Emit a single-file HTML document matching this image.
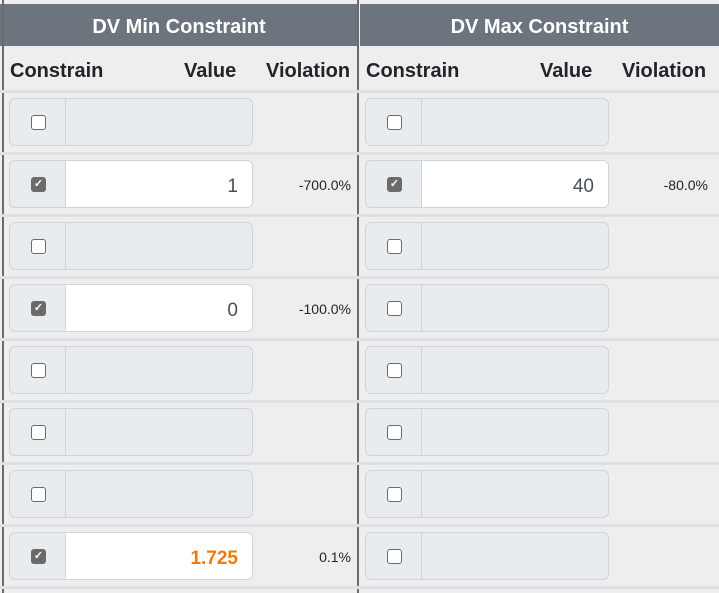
<!DOCTYPE html>
<html><head><style>
*{box-sizing:border-box;margin:0;padding:0}
body{width:719px;height:593px;overflow:hidden;background:#eeeeee;font-family:"Liberation Sans",sans-serif;position:relative;color:#212529}
.a{position:absolute}
.hd{background:#6c757d;color:#fff;font-weight:bold;font-size:20px;top:4px;height:42px;line-height:46px;text-align:center}
.vl{width:2px;background:#6b6b6b;top:0;height:593px}
.hl{height:3px;background:#dfe1e4;left:0;width:719px}
.ch{font-weight:bold;font-size:20px;top:60px}
.grp{height:48px;width:244px;border:1px solid #ced4da;border-radius:6px;background:#e9ecef;overflow:hidden}
.ad{position:absolute;left:0;top:0;width:56px;height:46px;border-right:1px solid #ced4da}
.cb{position:absolute;left:21px;top:16px;width:15px;height:15px;border:1.5px solid #6b6b6b;border-radius:3px;background:#fff}
.cb.on{background:#6b6b6b;color:#fff;font-size:11px;line-height:12px;text-align:center;font-weight:bold}
.val{position:absolute;left:56px;top:0;right:0;height:46px;background:#fff;text-align:right;padding-right:14px;line-height:52px;font-size:19px;color:#495057}
.vio{font-size:14px;text-align:right;width:120px}
</style></head><body>
<div class="a hd" style="left:0;width:358px">DV Min Constraint</div>
<div class="a hd" style="left:360px;width:359px">DV Max Constraint</div>
<div class="a vl" style="left:2px"></div>
<div class="a vl" style="left:357px"></div>
<div class="a ch" style="left:10px">Constrain</div>
<div class="a ch" style="left:184px">Value</div>
<div class="a ch" style="left:266px">Violation</div>
<div class="a ch" style="left:366px">Constrain</div>
<div class="a ch" style="left:540px">Value</div>
<div class="a ch" style="left:622px">Violation</div>
<div id="rows"></div>
<script>
var rows=[[1,"1","-700.0%",1,"40","-80.0%"],[0],[1,"0","-100.0%",0],[0],[0],[0],[1,"1.725","0.1%",0]];
var full=[[0,"","",0,"",""]].concat(rows.map(function(r){return r}));
var h="";
for(var i=0;i<8;i++){
 var y=91+i*62;
 h+='<div class="a hl" style="top:'+(y-1)+'px"></div>';
 var r=full[i];
 for(var s=0;s<2;s++){
  var on=s==0?r[0]:r[3], v=s==0?r[1]:r[4], vi=s==0?r[2]:r[5];
  var x=s==0?9:365;
  h+='<div class="a grp" style="left:'+x+'px;top:'+(y+7)+'px"><div class="ad"><div class="cb'+(on?' on':'')+'">'+(on?'✓':'')+'</div></div>'+
   (on?'<div class="val"'+(v=="1.725"?' style="color:#f07b05;font-weight:bold"':'')+'>'+v+'</div>':'')+'</div>';
  if(on&&vi) h+='<div class="a vio" style="left:'+(s==0?231:588)+'px;top:'+(y+24)+'px">'+vi+'</div>';
 }
}
h+='<div class="a hl" style="top:586px"></div>';
document.getElementById('rows').innerHTML=h;
</script>
</body></html>
